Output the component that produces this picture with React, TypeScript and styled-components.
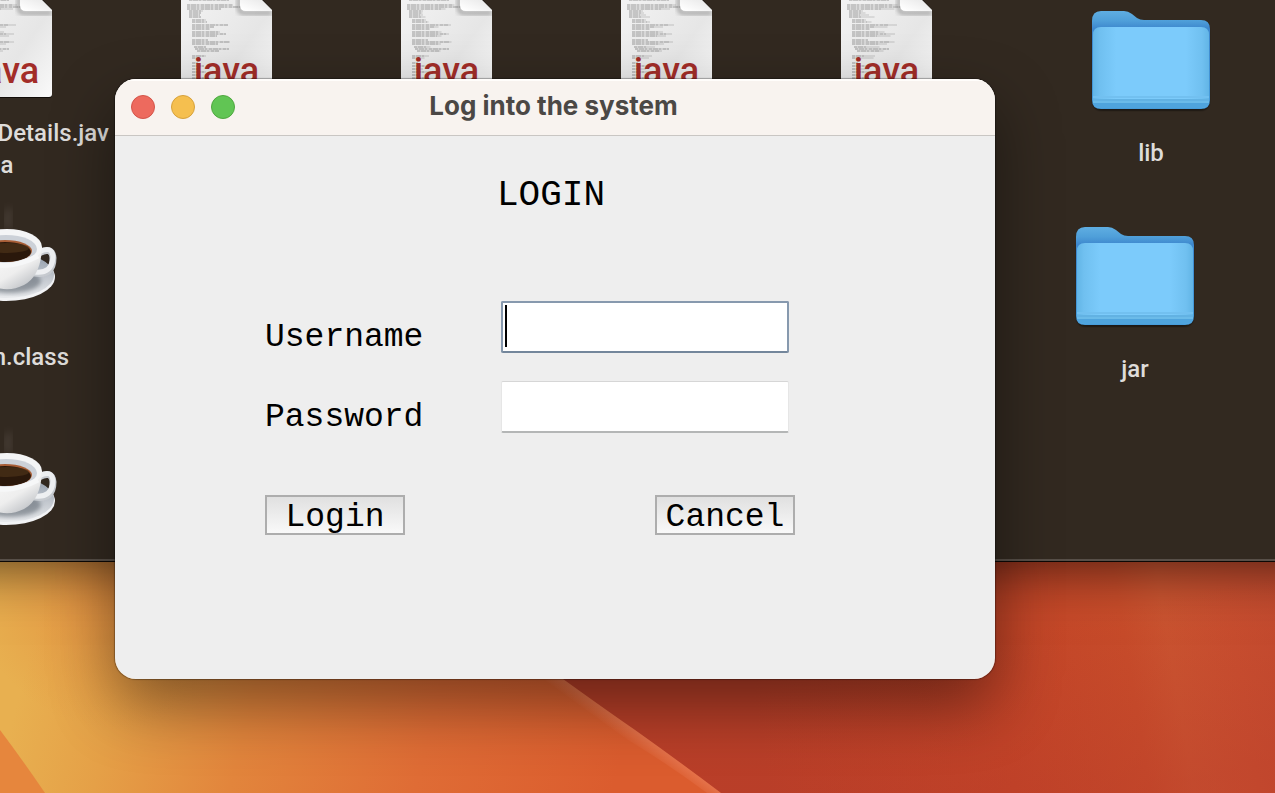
import React from "react";
import styled, { createGlobalStyle } from "styled-components";

const GlobalStyle = createGlobalStyle`
  * { box-sizing: border-box; }
  body { margin: 0; overflow: hidden; }
`;

const Desktop = styled.main`
  position: relative;
  min-height: 100vh;
  overflow: hidden;
  font-family: Inter, sans-serif;
`;

const WallpaperArt = styled.svg`
  position: absolute;
  inset: 0;
  width: 100%;
  height: 100%;
`;

const FinderWindow = styled.section`
  position: relative;
  height: 562px;

  &::before {
    content: "";
    position: absolute;
    inset: 0 -80px;
    background: #322920;
    border-bottom: 1px solid #0c0805;
    box-shadow: inset 0 -2px 0 #574f48, 0 6px 52px rgba(0, 0, 0, 0.6);
  }
`;

const FinderItem = styled.figure<{ $x: number; $y: number }>`
  position: absolute;
  left: ${(p) => p.$x}px;
  top: ${(p) => p.$y}px;
  width: 220px;
  margin: 0;
  display: flex;
  flex-direction: column;
  align-items: center;
`;

const ItemLabel = styled.figcaption<{ $width?: number; $gap: number }>`
  width: ${(p) => (p.$width ? `${p.$width}px` : "auto")};
  margin-top: ${(p) => p.$gap}px;
  font-family: Roboto, sans-serif;
  font-size: 24px;
  font-weight: 500;
  line-height: 32px;
  color: #dedcda;
  text-align: right;
  white-space: nowrap;
`;

const CenterLine = styled.span`
  display: block;
  text-align: center;
`;

const DialogWindow = styled.section`
  position: absolute;
  left: 115px;
  top: 79px;
  width: 880px;
  min-height: 600px;
  overflow: hidden;
  border-radius: 21px;
  background: #eeeeee;
`;

const DialogShadow = styled.div`
  position: absolute;
  left: 115px;
  top: 79px;
  width: 880px;
  height: 600px;
  border-radius: 21px;
  box-shadow: 0 0 1px 1px rgba(0, 0, 0, 0.3), 0 26px 64px rgba(0, 0, 0, 0.44);
`;

const TitleBar = styled.header`
  display: grid;
  grid-template-columns: 108px 1fr 108px;
  align-items: center;
  height: 57px;
  padding: 0 16px;
  background: #f8f3ef;
  border-bottom: 1px solid #c9c6c3;
  box-shadow: inset 0 2px 0 #fffdfb;
`;

const WindowButtons = styled.div`
  display: flex;
  gap: 16px;
`;

const WindowButton = styled.button<{ $fill: string; $edge: string }>`
  width: 24px;
  height: 24px;
  padding: 0;
  border: 1px solid ${(p) => p.$edge};
  border-radius: 50%;
  background: ${(p) => p.$fill};
`;

const WindowTitle = styled.h1`
  margin: 0;
  padding: 0 3px 2px 0;
  font-size: 26px;
  font-weight: 700;
  line-height: 32px;
  color: #4b4845;
  text-align: center;
`;

const LoginForm = styled.form`
  padding: 38px 200px 0 150px;
  font-family: "Liberation Mono", monospace;
  color: #000;
`;

const Heading = styled.h2`
  margin: 0 0 83px 42px;
  font-size: 36px;
  font-weight: 400;
  line-height: 44px;
  text-align: center;
`;

const FieldRow = styled.div`
  display: grid;
  grid-template-columns: 236px 288px;
  align-items: end;
  margin-bottom: 28px;
`;

const FieldLabel = styled.label`
  font-size: 33px;
  line-height: 30px;
`;

const FieldInput = styled.input`
  width: 100%;
  height: 52px;
  padding: 0 6px;
  border: 1px solid #e6e6e6;
  border-top-color: #d6d6d6;
  border-bottom: 2px solid #b4b6b6;
  border-radius: 2px;
  outline: none;
  background: #fff;
  font: inherit;
  font-size: 33px;

  &:focus {
    border: 2px solid #8799ae;
    border-bottom-color: #73869b;
    background: linear-gradient(#000, #000) 2px 2px / 2px 42px no-repeat #fff;
    caret-color: transparent;
  }
`;

const ButtonRow = styled.div`
  display: flex;
  justify-content: space-between;
  padding-top: 34px;
`;

const FormButton = styled.button`
  width: 140px;
  height: 40px;
  padding: 6px 0 0;
  border: 2px solid #adadad;
  background: linear-gradient(#e0e0e0, #f9f9f9);
  font-family: "Liberation Mono", monospace;
  font-size: 33px;
  line-height: 30px;
  color: #000;
`;

function Wallpaper() {
  return (
    <WallpaperArt viewBox="0 0 1275 793" preserveAspectRatio="none" aria-hidden="true">
      <defs>
        <linearGradient id="orange" gradientUnits="userSpaceOnUse" x1="20" y1="690" x2="600" y2="840">
          <stop offset="0" stopColor="#e8b050" />
          <stop offset="0.16" stopColor="#e5a047" />
          <stop offset="0.38" stopColor="#e2853c" />
          <stop offset="0.68" stopColor="#df6c35" />
          <stop offset="1" stopColor="#db5c2e" />
        </linearGradient>
        <radialGradient id="upper" gradientUnits="userSpaceOnUse" cx="120" cy="580" r="150">
          <stop offset="0" stopColor="#e28a3e" stopOpacity="0.9" />
          <stop offset="0.4" stopColor="#e28e40" stopOpacity="0.6" />
          <stop offset="1" stopColor="#e2943f" stopOpacity="0" />
        </radialGradient>
        <linearGradient id="red" gradientUnits="userSpaceOnUse" x1="760" y1="740" x2="1290" y2="650">
          <stop offset="0" stopColor="#b93f28" />
          <stop offset="0.45" stopColor="#c24427" />
          <stop offset="0.7" stopColor="#c74c2a" />
          <stop offset="0.78" stopColor="#ca5430" />
          <stop offset="0.9" stopColor="#c84f2f" />
          <stop offset="1" stopColor="#c44c2f" />
        </linearGradient>
        <linearGradient id="redFloor" gradientUnits="userSpaceOnUse" x1="1060" y1="620" x2="1100" y2="800">
          <stop offset="0" stopColor="#b93b2a" stopOpacity="0" />
          <stop offset="1" stopColor="#b93b2a" stopOpacity="0.4" />
        </linearGradient>
        <linearGradient id="ridge" gradientUnits="userSpaceOnUse" x1="627" y1="741" x2="635" y2="730">
          <stop offset="0" stopColor="#f08a68" stopOpacity="0" />
          <stop offset="1" stopColor="#ee8765" stopOpacity="0.5" />
        </linearGradient>
      </defs>
      <rect width="1275" height="793" fill="url(#orange)" />
      <rect width="300" height="793" fill="url(#upper)" />
      <path d="M0 730 Q24 762 45 793 H0Z" fill="#e6863d" />
      <path d="M400 560 Q560 678 635 730 Q680 762 721 793 H1275 V0 H400Z" fill="url(#red)" />
      <path d="M400 560 Q560 678 635 730 Q680 762 721 793 H1275 V0 H400Z" fill="url(#redFloor)" />
      <path d="M545 666 Q600 706 635 730 Q680 762 721 793 H707 Q668 764 628 740 Q590 713 545 680Z" fill="url(#ridge)" />
    </WallpaperArt>
  );
}

// Short runs of miniature source code: [x, y, width]
const codeLines: number[][] = [
  [8, 33, 40], [6, 38, 46], [6, 40, 56], [6, 42, 34], [8, 44, 14], [8, 46, 12], [8, 48, 11], [8, 50, 12],
  [11, 53, 14], [11, 55, 15], [11, 58, 36], [11, 60, 22], [11, 62, 18], [11, 65, 28], [11, 67, 34], [11, 69, 25],
  [11, 73, 16], [11, 75, 38], [11, 77, 26], [13, 80, 12], [14, 82, 34], [16, 84, 22], [11, 89, 14], [11, 91, 8],
  [11, 96, 6], [11, 99, 12], [11, 102, 8], [11, 105, 14], [11, 108, 8], [11, 111, 12],
];

function JavaFileIcon({ id, shift = 0 }: { id: string; shift?: number }) {
  return (
    <svg width="92" height="132" viewBox="0 0 92 132" aria-hidden="true">
      <defs>
        <linearGradient id={`${id}p`} x1="0" y1="0" x2="1" y2="1">
          <stop offset="0" stopColor="#f6f6f6" />
          <stop offset="0.65" stopColor="#e6e6e6" />
          <stop offset="1" stopColor="#fafafa" />
        </linearGradient>
        <linearGradient id={`${id}f`} x1="0.2" y1="1" x2="0.6" y2="0">
          <stop offset="0" stopColor="#ffffff" />
          <stop offset="1" stopColor="#d4d4d4" />
        </linearGradient>
        <filter id={`${id}b`}><feGaussianBlur stdDeviation="2" /></filter>
        <clipPath id={`${id}c`}><path d="M0 4 H50 L81 33 L91 43 V127 Q91 130 88 130 H3 Q0 130 0 127Z" /></clipPath>
      </defs>
      <path d="M0 4 H50 L81 32 L91 43 V128 Q91 131 88 131 H3 Q0 131 0 128Z" fill="#120d09" />
      <g clipPath={`url(#${id}c)`}>
        <rect width="92" height="132" fill={`url(#${id}p)`} />
        {codeLines.map(([x, y, w], i) => (
          <g key={i} stroke="#4a4a4a" strokeWidth="1" fill="none">
            <path d={`M${x} ${y}H${x + w + (shift * (i % 4)) / 2}`} opacity="0.25" />
            <path d={`M${x} ${y}H${x + w}`} strokeDasharray="3 1 5 1 2 2" opacity="0.3" />
          </g>
        ))}
        <path d="M58 25 V41 Q58 46 63 46 H91" fill="none" stroke="#666" strokeWidth="4" opacity="0.5" filter={`url(#${id}b)`} />
        <path d="M59 13 V38 Q59 44 65 44 H91 V43 L81 33Z" fill={`url(#${id}f)`} />
      </g>
      <text x="13" y="116" fontFamily="Roboto, sans-serif" fontSize="36" fontWeight="500" fill="#a32d28">java</text>
    </svg>
  );
}

function FolderIcon({ id }: { id: string }) {
  return (
    <svg width="120" height="102" viewBox="0 0 120 102" aria-hidden="true">
      <defs>
        <linearGradient id={`${id}back`} x1="0" y1="0" x2="0" y2="1">
          <stop offset="0" stopColor="#5faee2" />
          <stop offset="0.1" stopColor="#4f9fd9" />
          <stop offset="0.18" stopColor="#3d87cd" />
          <stop offset="1" stopColor="#479ddb" />
        </linearGradient>
        <linearGradient id={`${id}edge`} x1="0" y1="0" x2="1" y2="0">
          <stop offset="0" stopColor="#62b5e6" />
          <stop offset="0.06" stopColor="#70c0f0" />
          <stop offset="0.2" stopColor="#7ccbfb" />
          <stop offset="0.8" stopColor="#7ccbfb" />
          <stop offset="0.94" stopColor="#70c0f0" />
          <stop offset="1" stopColor="#62b5e6" />
        </linearGradient>
        <filter id={`${id}soft`}><feGaussianBlur stdDeviation="1" /></filter>
      </defs>
      <rect x="2" y="13" width="116" height="87" rx="8" fill="#110c08" filter={`url(#${id}soft)`} />
      <path d="M1 11 Q1 1 10 1 H33 Q37 1 41 4 L46 8 Q49 10 53 10 H110 Q119 10 119 19 V90 Q119 99 110 99 H10 Q1 99 1 90Z" fill={`url(#${id}back)`} />
      <path d="M2 25 Q2 17 10 17 H110 Q118 17 118 25 V90 Q118 98 110 98 H10 Q2 98 2 90Z" fill={`url(#${id}edge)`} />
      <path d="M2 87 H118" stroke="#72c0f0" strokeWidth="2" />
      <path d="M2 90 H118" stroke="#62b2e3" strokeWidth="2" />
      <path d="M2 92 H118" stroke="#6bbbe9" strokeWidth="2" />
      <path d="M2 93 H118 Q116 98 110 98 H10 Q4 98 2 93Z" fill="#4fa4dd" />
    </svg>
  );
}

function CoffeeIcon({ id }: { id: string }) {
  return (
    <svg width="112" height="104" viewBox="0 0 112 104" aria-hidden="true">
      <defs>
        <linearGradient id={`${id}cup`} x1="0" y1="0" x2="1" y2="1">
          <stop offset="0" stopColor="#ffffff" />
          <stop offset="0.6" stopColor="#eeeeee" />
          <stop offset="1" stopColor="#aaaeb4" />
        </linearGradient>
        <linearGradient id={`${id}plate`} x1="0" y1="0" x2="0" y2="1">
          <stop offset="0" stopColor="#8b98a7" />
          <stop offset="0.55" stopColor="#c2c7ce" />
          <stop offset="1" stopColor="#e8eaed" />
        </linearGradient>
        <filter id={`${id}steam`} x="-1" y="-1" width="3" height="3"><feGaussianBlur stdDeviation="4" /></filter>
        <filter id={`${id}shade`}><feGaussianBlur stdDeviation="2" /></filter>
      </defs>
      <path d="M58 28 Q54 18 59 8" stroke="#8b817c" strokeWidth="6" opacity="0.3" fill="none" filter={`url(#${id}steam)`} />
      <ellipse cx="55" cy="76" rx="49" ry="24" fill="#f2f3f5" />
      <ellipse cx="55" cy="74" rx="48" ry="23" fill={`url(#${id}plate)`} />
      <ellipse cx="59" cy="80" rx="31" ry="12" fill="#4e5660" opacity="0.5" filter={`url(#${id}shade)`} />
      <path d="M88 52 Q101 45 102 57 Q102 75 84 72" fill="none" stroke="#c7cbd0" strokeWidth="7" strokeLinecap="round" />
      <path d="M88 51 Q101 44 102 56 Q101 73 84 71" fill="none" stroke="#eef0f2" strokeWidth="5" strokeLinecap="round" />
      <path d="M22 46 Q22 75 42 85 Q57 92 73 84 Q90 75 91 46Z" fill={`url(#${id}cup)`} />
      <ellipse cx="56" cy="46" rx="35" ry="18" fill="#f4f5f6" />
      <ellipse cx="55" cy="48" rx="31" ry="14" fill="#ccd1d8" />
      <ellipse cx="54" cy="50" rx="27" ry="11" fill="#a85e36" />
      <ellipse cx="54" cy="51" rx="26" ry="10" fill="#2a180b" />
      <ellipse cx="56" cy="47" rx="22" ry="5" fill="#4b3218" opacity="0.7" />
      <path d="M25 56 Q52 73 87 55" stroke="#f6f7f8" strokeWidth="5" fill="none" />
    </svg>
  );
}

export default function App() {
  return (
    <>
      <GlobalStyle />
      <Desktop>
        <Wallpaper />
        <FinderWindow aria-label="Files">
          <FinderItem $x={-103} $y={-33}>
            <JavaFileIcon id="j0" shift={8} />
            <ItemLabel $width={204} $gap={18}>
              Details.jav
              <CenterLine>a</CenterLine>
            </ItemLabel>
          </FinderItem>
          {[117, 337, 557, 777].map((x, i) => (
            <FinderItem key={x} $x={x} $y={-33}>
              <JavaFileIcon id={`j${i + 1}`} shift={i * 3} />
            </FinderItem>
          ))}
          <FinderItem $x={-103} $y={201}>
            <CoffeeIcon id="c0" />
            <ItemLabel $width={124} $gap={36}>n.class</ItemLabel>
          </FinderItem>
          <FinderItem $x={-103} $y={425}>
            <CoffeeIcon id="c1" />
          </FinderItem>
          <FinderItem $x={1041} $y={10}>
            <FolderIcon id="lib" />
            <ItemLabel $gap={25}>lib</ItemLabel>
          </FinderItem>
          <FinderItem $x={1025} $y={226}>
            <FolderIcon id="jar" />
            <ItemLabel $gap={25}>jar</ItemLabel>
          </FinderItem>
        </FinderWindow>

        <DialogShadow />
        <DialogWindow aria-labelledby="window-title">
          <TitleBar>
            <WindowButtons>
              <WindowButton type="button" aria-label="Close" $fill="#ed6a5e" $edge="#d35449" />
              <WindowButton type="button" aria-label="Minimize" $fill="#f5bf4f" $edge="#d6a13c" />
              <WindowButton type="button" aria-label="Zoom" $fill="#61c554" $edge="#4fa73f" />
            </WindowButtons>
            <WindowTitle id="window-title">Log into the system</WindowTitle>
          </TitleBar>
          <LoginForm onSubmit={(e) => e.preventDefault()}>
            <Heading>LOGIN</Heading>
            <FieldRow>
              <FieldLabel htmlFor="username">Username</FieldLabel>
              <FieldInput id="username" type="text" autoFocus />
            </FieldRow>
            <FieldRow>
              <FieldLabel htmlFor="password">Password</FieldLabel>
              <FieldInput id="password" type="password" />
            </FieldRow>
            <ButtonRow>
              <FormButton type="submit">Login</FormButton>
              <FormButton type="button">Cancel</FormButton>
            </ButtonRow>
          </LoginForm>
        </DialogWindow>
      </Desktop>
    </>
  );
}
